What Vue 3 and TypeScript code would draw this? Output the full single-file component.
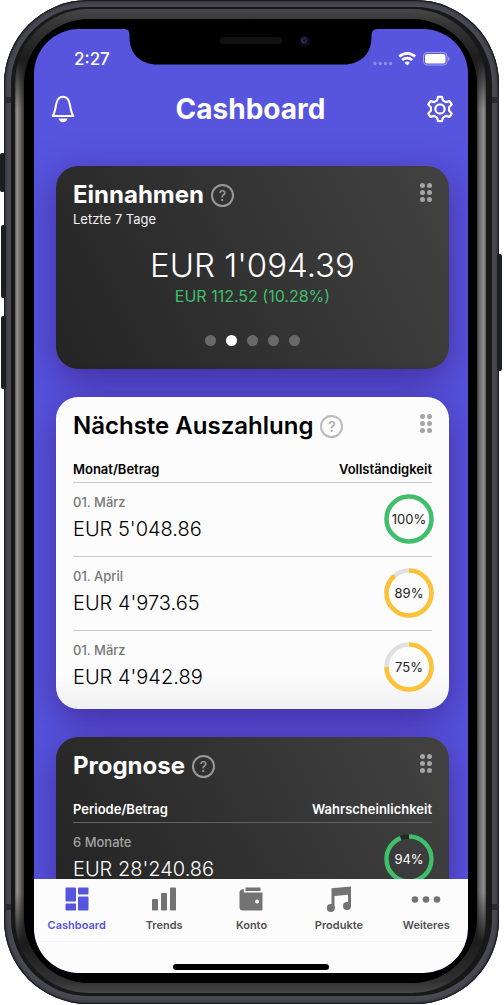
<script setup lang="ts">
import { ref } from 'vue'

interface Row { label: string; amount: string; percent: number; color: string }
interface TableCard { title: string; left: string; right: string; dark: boolean; rows: Row[] }

const green = '#40bf6b'
const yellow = '#ffc237'

const cards: TableCard[] = [
  {
    title: 'Nächste Auszahlung', left: 'Monat/Betrag', right: 'Vollständigkeit', dark: false,
    rows: [
      { label: '01. März', amount: "EUR 5'048.86", percent: 100, color: green },
      { label: '01. April', amount: "EUR 4'973.65", percent: 89, color: yellow },
      { label: '01. März', amount: "EUR 4'942.89", percent: 75, color: yellow },
    ],
  },
  {
    title: 'Prognose', left: 'Periode/Betrag', right: 'Wahrscheinlichkeit', dark: true,
    rows: [{ label: '6 Monate', amount: "EUR 28'240.86", percent: 94, color: green }],
  },
]

const tabs = ['Cashboard', 'Trends', 'Konto', 'Produkte', 'Weiteres']
const activeTab = ref('Cashboard')
const page = ref(1)
</script>

<template>
  <div class="stage">
    <div class="phone">
      <i class="key key-mute"></i><i class="key key-up"></i><i class="key key-down"></i><i class="key key-power"></i>
      <i class="band band-top"></i><i class="band band-bottom"></i>
      <div class="rim"><div class="bevel"><div class="bezel">
        <div class="screen">
          <svg class="notch" viewBox="0 0 253 36" width="253" height="36" aria-hidden="true">
            <path d="M0 0H253Q247 0 247 6V8C247 25 236 35.500 219 35.500H33C16 35.500 5 25 5 8V6Q5 0 0 0Z" fill="#000" />
            <rect x="95" y="8" width="63" height="7" rx="3.500" fill="#111112" />
            <circle cx="180" cy="12" r="5.500" fill="#0d0d14" />
            <circle cx="179.500" cy="11.500" r="3" fill="#2a2763" />
            <circle cx="180" cy="11.500" r="1.200" fill="#0b0b20" />
          </svg>

          <div class="status">
            <span class="time">2:27</span>
            <svg viewBox="0 0 79 16" width="79" height="16" aria-hidden="true">
              <g fill="#8f8ceb"><circle cx="3" cy="12.500" r="1.700" /><circle cx="8.200" cy="12.500" r="1.700" /><circle cx="13.400" cy="12.500" r="1.700" /><circle cx="18.600" cy="12.500" r="1.700" /></g>
              <g fill="none" stroke="#fff" stroke-width="2.700">
                <path d="M27.300 5.600a11.500 11.500 0 0 1 15.800 0" />
                <path d="M30.200 9a7.400 7.400 0 0 1 10 0" />
              </g>
              <path d="M35.200 14.600l-2.600-2.900a3.800 3.800 0 0 1 5.200 0z" fill="#fff" />
              <rect x="51.500" y="1.500" width="23.500" height="12.500" rx="3.500" fill="none" stroke="#a5a3f0" />
              <rect x="53" y="3" width="20.500" height="9.500" rx="2" fill="#fff" />
              <path d="M76 6q1.700.7 1.700 2t-1.700 2z" fill="#a5a3f0" />
            </svg>
          </div>

          <header class="top">
            <button class="icon" aria-label="Mitteilungen">
              <svg viewBox="0 0 24 28" width="24" height="28" fill="none" stroke="#fff" stroke-width="2" stroke-linejoin="round">
                <path d="M1.700 21C3.800 17.800 4.300 14 5.200 9.300 6.100 4.300 8.200 1.700 12 1.700s5.900 2.600 6.800 7.600c.9 4.700 1.400 8.500 3.500 11.700z" />
                <path d="M7.500 23.500h9c-.6 2.200-2.200 3.700-4.500 3.700s-3.900-1.500-4.500-3.700z" fill="#fff" stroke="none" />
              </svg>
            </button>
            <h1>Cashboard</h1>
            <button class="icon" aria-label="Einstellungen">
              <svg viewBox="0 0 24 24" width="28" height="28" fill="none" stroke="#fff" stroke-width="1.900" stroke-linejoin="round">
                <path d="M10.300 1.600h3.400l.8 3 2.500 1.500 3.100-.9 1.900 2.900-2.200 2.500v2.800l2.200 2.500-1.900 2.900-3.100-.9-2.500 1.500-.8 3h-3.400l-.8-3L7 17.900l-3.100.9L2 15.900l2.200-2.500v-2.800L2 8.100l1.900-2.900 3.100.9 2.500-1.500z" />
                <circle cx="12" cy="12" r="4" />
              </svg>
            </button>
          </header>

          <main>
            <section class="card dark">
              <div class="head">
                <h2>Einnahmen</h2>
                <button class="help" aria-label="Hilfe">?</button>
                <button class="grip" aria-label="Verschieben"><i v-for="n in 6" :key="n"></i></button>
              </div>
              <p class="sub">Letzte 7 Tage</p>
              <p class="total">EUR 1'094.39</p>
              <p class="change">EUR 112.52 (10.28%)</p>
              <div class="dots">
                <button v-for="n in 5" :key="n" :class="{ on: page === n - 1 }" :aria-label="`Seite ${n}`" @click="page = n - 1"></button>
              </div>
            </section>

            <section v-for="card in cards" :key="card.title" class="card" :class="card.dark ? 'dark' : 'light'">
              <div class="head">
                <h2>{{ card.title }}</h2>
                <button class="help" aria-label="Hilfe">?</button>
                <button class="grip" aria-label="Verschieben"><i v-for="n in 6" :key="n"></i></button>
              </div>
              <table>
                <thead><tr><th>{{ card.left }}</th><th class="end">{{ card.right }}</th></tr></thead>
                <tbody>
                  <tr v-for="row in card.rows" :key="row.amount">
                    <td>
                      <span class="label">{{ row.label }}</span>
                      <span class="amount">{{ row.amount }}</span>
                    </td>
                    <td class="end">
                      <span class="ring">
                        <svg viewBox="0 0 50 50" width="50" height="50" fill="none" stroke-width="4.500" aria-hidden="true">
                          <circle class="track" cx="25" cy="25" r="22.500" />
                          <circle cx="25" cy="25" r="22.500" :stroke="row.color" pathLength="100" :stroke-dasharray="`${row.percent} 100`" transform="rotate(-90 25 25)" />
                        </svg>
                        <span>{{ row.percent }}%</span>
                      </span>
                    </td>
                  </tr>
                </tbody>
              </table>
            </section>
          </main>

          <nav>
            <div class="tabs">
              <button v-for="(tab, i) in tabs" :key="tab" :class="{ active: activeTab === tab }" @click="activeTab = tab">
                <svg viewBox="0 0 30 26" width="30" height="26" fill="currentColor" aria-hidden="true">
                  <g v-if="i === 0">
                    <rect x="3.500" y="1.500" width="10.500" height="14" rx="1" /><rect x="16" y="1.500" width="10.500" height="7" rx="1" />
                    <rect x="3.500" y="17.500" width="10.500" height="7" rx="1" /><rect x="16" y="10.500" width="10.500" height="14" rx="1" />
                  </g>
                  <g v-else-if="i === 1">
                    <rect x="3" y="13" width="6" height="11.500" rx="1" /><rect x="12" y="7" width="6" height="17.500" rx="1" /><rect x="21" y="1.500" width="6" height="23" rx="1" />
                  </g>
                  <g v-else-if="i === 2">
                    <path d="M9.500 1.500H24.500V5H9.500z" />
                    <path d="M7.800 3V6.500H26.500V23.500q0 1-1 1H7q-3.500 0-3.500-3.500V6.500Q3.500 3.500 7.800 3zM21 13.600a2 2 0 1 0 .1 0z" fill-rule="evenodd" />
                  </g>
                  <g v-else-if="i === 3">
                    <path d="M7.500 2.300L27 .5V20.500H24V8.700L10.500 10V22.500H7.500z" /><circle cx="6.800" cy="22" r="4" /><circle cx="23" cy="20" r="4" />
                  </g>
                  <g v-else>
                    <circle cx="4" cy="13.500" r="3.300" /><circle cx="15" cy="13.500" r="3.300" /><circle cx="26" cy="13.500" r="3.300" />
                  </g>
                </svg>
                <span>{{ tab }}</span>
              </button>
            </div>
            <div class="home"></div>
          </nav>
        </div>
      </div></div></div>
    </div>
  </div>
</template>

<style>
body { margin: 0; background: #fff; }
</style>

<style scoped>
* { box-sizing: border-box; }
button { border: 0; padding: 0; margin: 0; background: none; color: inherit; font: inherit; cursor: pointer; }
h1, h2, p { margin: 0; }
svg { display: block; }

.stage { height: 100vh; padding: 0 5px 1px 4px; font-family: Inter, "Liberation Sans", sans-serif; }
.phone {
  position: relative; height: 100%; padding: 7px 7px 8px; border-radius: 84px;
  background: #484952; box-shadow: inset 0 0 0 1px #1a1b1f, inset 0 0 3px 2px #303138;
}
.rim { position: relative; height: 100%; padding: 2px 6px 3px 4px; border-radius: 77px; background: #18181a; }
.bevel {
  height: 100%; padding: 10px 9px; border-radius: 74px;
  background:
    linear-gradient(to bottom, #474747 0, #383838 12px, #1c1c1c 50px, transparent 100px, transparent calc(100% - 100px), #1c1c1c calc(100% - 50px), #303030 calc(100% - 12px), #484848 100%),
    linear-gradient(to right, #5c5a58 0, #95928e 2px, #6d6b69 5px, #333 9px, #333 calc(100% - 9px), #666 calc(100% - 7px), #8f8f8f calc(100% - 2px), #555 100%);
}
.bezel { height: 100%; padding: 10px 9px 10px 10px; border-radius: 65px; background: #000; }
.screen {
  position: relative; height: 100%; display: flex; flex-direction: column; overflow: hidden;
  border-radius: 45px; background: #5754de;
}

.key { position: absolute; width: 5px; border-radius: 2px; background: #1d1e22; }
.key-mute { left: -4px; top: 153px; height: 39px; }
.key-up { left: -3px; top: 225px; height: 73px; }
.key-down { left: -3px; top: 316px; height: 73px; }
.key-power { right: -3px; top: 254px; height: 117px; }
.band { position: absolute; left: 0; right: 0; height: 6px; background: #2b2c31; }
.band-top { top: 97px; }
.band-bottom { bottom: 94px; }

.notch { position: absolute; top: 0; left: 50%; transform: translateX(-50%); }
.status { flex: none; height: 60px; padding: 0 17px 0 40px; display: flex; align-items: center; justify-content: space-between; color: #fff; }
.time { font-size: 17px; font-weight: 500; }
.top { flex: none; height: 40px; padding: 0 14px 0 17px; display: flex; align-items: center; justify-content: space-between; color: #fff; }
h1 { font-size: 28px; line-height: 40px; font-weight: 700; }

main { flex: 1; min-height: 0; overflow: hidden; padding: 37px 19px 0 22px; display: flex; flex-direction: column; gap: 28px; }
.card { flex: none; padding: 13px 17px 5px; border-radius: 22px; box-shadow: 0 10px 36px rgba(50, 15, 110, .55); }
.dark { color: #fff; background: linear-gradient(63deg, #242424, #424242); }
.light { color: #000; background: linear-gradient(#fcfcfc 88%, #f1f1f3); }
.head { display: flex; align-items: center; gap: 7px; height: 32px; }
h2 { font-size: 24px; line-height: 32px; font-weight: 700; white-space: nowrap; }
.light h2 { font-weight: 600; }
.help { width: 23px; height: 23px; border: 2px solid #999; border-radius: 50%; color: #999; font-size: 14px; line-height: 19px; font-weight: 500; }
.light .help { border-color: #bbb; color: #aaa; }
.grip { margin-left: auto; align-self: flex-start; margin-top: 4px; display: grid; grid-template-columns: 5px 5px; gap: 2px; }
.grip i { width: 5px; height: 5px; border-radius: 50%; background: #a5a5a5; }

.sub { font-size: 13px; line-height: 17px; color: #f2f2f2; }
.total { margin-top: 17px; font-size: 33px; line-height: 40px; font-weight: 300; text-align: center; }
.change { font-size: 16px; line-height: 22px; text-align: center; color: #40bf6b; }
.dots { margin: 28px 0 18px; display: flex; justify-content: center; gap: 10px; }
.dots button { width: 11px; height: 11px; border-radius: 50%; background: #69696b; }
.dots .on { background: #fff; }

table { width: 100%; margin-top: 13px; border-collapse: collapse; }
th, td { padding: 0; text-align: left; border-bottom: 1px solid #c8c8c8; }
.dark th, .dark td { border-color: #626266; }
th { height: 27px; padding-top: 3px; font-size: 13px; line-height: 22px; font-weight: 600; vertical-align: top; }
td { height: 74px; }
tbody tr:last-child td { border-bottom: 0; }
.end { text-align: right; }
.label, .amount { display: block; }
.label { font-size: 13px; line-height: 20px; font-weight: 500; color: #777; }
.dark .label { color: #a3a3a3; }
.amount { font-size: 20px; line-height: 34px; font-weight: 300; }
.ring { display: inline-grid; place-items: center; margin-right: -2px; vertical-align: middle; }
.ring > * { grid-area: 1 / 1; }
.ring span { font-size: 13px; line-height: 16px; }
.light .ring span { color: #222; }
.track { stroke: #e0e0e2; }
.dark .track { stroke: #262626; }

nav { flex: none; height: 94px; display: flex; flex-direction: column; justify-content: space-between; align-items: center; padding-bottom: 3px; background: #fcfcfc; color: #737373; }
.tabs { align-self: stretch; margin: 0 -2px 0 -1px; height: 63px; padding-top: 7px; display: grid; grid-template-columns: repeat(5, 1fr); border-bottom: 1px solid #f5f5f5; }
.tabs button { display: flex; flex-direction: column; align-items: center; gap: 6px; font-size: 11px; line-height: 14px; font-weight: 600; }
.tabs span { color: #505050; }
.tabs .active, .tabs .active span { color: #5754de; }
.home { width: 36%; height: 6px; border-radius: 3px; background: #000; }
</style>
